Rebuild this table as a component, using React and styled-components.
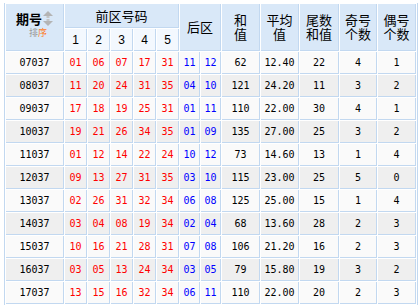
import React from 'react';
import styled, { createGlobalStyle } from 'styled-components';

const line = '#c2d8f0';

const GlobalStyle = createGlobalStyle`
    html, body {
        margin:0;
        padding:0;
        background:#ffffff;
    }
`

const Wrap = styled.div`
    padding:3px 0 0 4px;
`

const Table = styled.table`
    table-layout:fixed;
    width:414px;
    border-collapse:separate;
    border-spacing:1px;
    border-left:1px solid ${line};
    border-right:1px solid ${line};
    background:#ffffff;
    font-family:"DejaVu Sans Mono", monospace;
    font-size:10px;
    color:#000;
`

const Col = styled.col`
    width:${p => p.$w}px;
`

const Head = styled.th`
    padding:0;
    font-weight:normal;
    font-family:"Noto Sans CJK SC", sans-serif;
    font-size:13px;
    line-height:14px;
    text-align:center;
    vertical-align:middle;
    background:#d9e8f8;
    border-right:1px solid ${line};
    border-bottom:1px solid ${line};
    height:${p => p.$h || 23}px;
    box-sizing:border-box;
`

const SubHead = styled(Head)`
    background:#f3f8fe;
    font-family:"Liberation Sans", sans-serif;
    font-size:12px;
    height:22px;
`

const IssueHead = styled(Head)`
    padding-bottom:5px;
`

const IssueBlock = styled.div`
    display:inline-flex;
    flex-direction:column;
    align-items:flex-start;
`

const IssueTitle = styled.div`
    display:flex;
    align-items:center;
    font-weight:bold;
    font-size:13px;
    line-height:14px;
`

const SortText = styled.div`
    margin:2px 0 0 13px;
    font-size:9px;
    line-height:10px;
    color:#9a9a9a;
    span { color:#ff7b1c; }
`

const Row = styled.tr`
    background:${p => p.$alt ? '#efefef' : '#fafafa'};
`

const Cell = styled.td`
    padding:0;
    height:22px;
    box-sizing:border-box;
    text-align:center;
    vertical-align:middle;
    border-right:1px solid ${line};
    border-bottom:1px solid ${line};
    color:${p => p.$tone === 'red' ? '#ff0000' : p.$tone === 'blue' ? '#0000ff' : '#000'};
`

const SortIcon = () => (
    <svg width="10" height="15" viewBox="0 0 10 15" style={{ marginLeft: 1 }}>
        <polygon points="0,5 5,0 10,5" fill="#b4b4b4" />
        <rect x="3.5" y="5" width="3" height="2" fill="#c4c4c4" />
        <rect x="3.5" y="8" width="3" height="2" fill="#c4c4c4" />
        <polygon points="0,10 10,10 5,15" fill="#b4b4b4" />
    </svg>
)

const rows = [
    ['07037', ['01','06','07','17','31'], ['11','12'], '62', '12.40', '22', '4', '1'],
    ['08037', ['11','20','24','31','35'], ['04','10'], '121', '24.20', '11', '3', '2'],
    ['09037', ['17','18','19','25','31'], ['01','11'], '110', '22.00', '30', '4', '1'],
    ['10037', ['19','21','26','34','35'], ['01','09'], '135', '27.00', '25', '3', '2'],
    ['11037', ['01','12','14','22','24'], ['10','12'], '73', '14.60', '13', '1', '4'],
    ['12037', ['09','13','27','31','35'], ['03','10'], '115', '23.00', '25', '5', '0'],
    ['13037', ['02','26','31','32','34'], ['06','08'], '125', '25.00', '15', '1', '4'],
    ['14037', ['03','04','08','19','34'], ['02','04'], '68', '13.60', '28', '2', '3'],
    ['15037', ['10','16','21','28','31'], ['07','08'], '106', '21.20', '16', '2', '3'],
    ['16037', ['03','05','13','24','34'], ['03','05'], '79', '15.80', '19', '3', '2'],
    ['17037', ['13','15','16','32','34'], ['06','11'], '110', '22.00', '20', '2', '3'],
]

const widths = [58, 22, 22, 22, 22, 22, 20, 20, 38, 38, 39, 37, 38]

function App(){
    return (
        <Wrap>
            <GlobalStyle />
            <Table>
                <colgroup>
                    {widths.map((w, i) => <Col key={i} $w={w} />)}
                </colgroup>
                <thead>
                    <tr>
                        <IssueHead rowSpan={2}>
                            <IssueBlock>
                                <IssueTitle>期号<SortIcon /></IssueTitle>
                                <SortText>排<span>序</span></SortText>
                            </IssueBlock>
                        </IssueHead>
                        <Head colSpan={5} $h={24}>前区号码</Head>
                        <Head colSpan={2} rowSpan={2}>后区</Head>
                        <Head rowSpan={2}>和<br />值</Head>
                        <Head rowSpan={2}>平均<br />值</Head>
                        <Head rowSpan={2}>尾数<br />和值</Head>
                        <Head rowSpan={2}>奇号<br />个数</Head>
                        <Head rowSpan={2}>偶号<br />个数</Head>
                    </tr>
                    <tr>
                        {[1, 2, 3, 4, 5].map(n => <SubHead key={n}>{n}</SubHead>)}
                    </tr>
                </thead>
                <tbody>
                    {rows.map(([issue, front, back, sum, avg, tail, odd, even], i) => (
                        <Row key={issue} $alt={i % 2 === 1}>
                            <Cell>{issue}</Cell>
                            {front.map((n, j) => <Cell key={'f' + j} $tone="red">{n}</Cell>)}
                            {back.map((n, j) => <Cell key={'b' + j} $tone="blue">{n}</Cell>)}
                            <Cell>{sum}</Cell>
                            <Cell>{avg}</Cell>
                            <Cell>{tail}</Cell>
                            <Cell>{odd}</Cell>
                            <Cell>{even}</Cell>
                        </Row>
                    ))}
                </tbody>
            </Table>
        </Wrap>
    )
}

export default App
